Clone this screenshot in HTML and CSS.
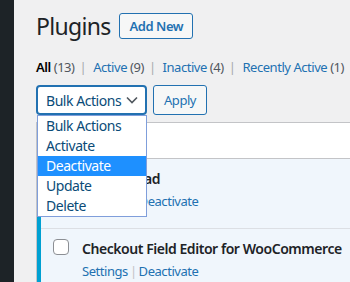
FILE: index.html
```html
<!DOCTYPE html>
<html lang="en">
<head>
    <meta charset="UTF-8">
    <meta name="viewport" content="width=device-width, initial-scale=1.0">
    <title>Plugins</title>
    <link rel="stylesheet" href="styles.css">
</head>
<body>
    <div class="admin">
        <div class="sidebar"></div>

        <main class="wrap">
            <div class="title-row">
                <h1>Plugins</h1>
                <a class="page-action" href="#">Add New</a>
            </div>

            <ul class="subsubsub">
                <li><a class="current" href="#">All <span class="count">(13)</span></a><span class="sep">|</span></li>
                <li><a href="#">Active <span class="count">(9)</span></a><span class="sep">|</span></li>
                <li><a href="#">Inactive <span class="count">(4)</span></a><span class="sep">|</span></li>
                <li><a href="#">Recently Active <span class="count">(1)</span></a></li>
            </ul>

            <div class="tablenav">
                <div class="bulk">
                    <div class="select">
                        <span>Bulk Actions</span>
                        <svg class="chevron" width="12" height="8" viewBox="0 0 12 8">
                            <polyline points="1,1.5 6,6.5 11,1.5" fill="none" stroke="#50575e" stroke-width="1.6"/>
                        </svg>
                    </div>
                    <!-- open list of the select -->
                    <ul class="dropdown">
                        <li>Bulk Actions</li>
                        <li>Activate</li>
                        <li class="hover">Deactivate</li>
                        <li>Update</li>
                        <li>Delete</li>
                    </ul>
                </div>
                <button class="button">Apply</button>
            </div>

            <div class="plugins">
                <div class="plugins-head"></div>

                <div class="plugin-row active">
                    <div class="check-col"><span class="checkbox"></span></div>
                    <div class="plugin-col">
                        <strong class="plugin-name">Easy Upload</strong>
                        <div class="row-actions"><a href="#">Settings</a><span class="sep">|</span><a href="#">Deactivate</a></div>
                    </div>
                </div>

                <div class="plugin-row active">
                    <div class="check-col"><span class="checkbox"></span></div>
                    <div class="plugin-col">
                        <strong class="plugin-name">Checkout Field Editor for WooCommerce</strong>
                        <div class="row-actions"><a href="#">Settings</a><span class="sep">|</span><a href="#">Deactivate</a></div>
                    </div>
                </div>
            </div>
        </main>
    </div>
</body>
</html>
```

FILE: styles.css
```css
:root {
    --admin-dark: #1d2327;
    --bg: #f0f0f1;
    --link: #2271b1;
    --border: #c3c4c7;
    --active-bg: #f0f6fc;
    --active-bar: #00a0d2;
}

* {
    box-sizing: border-box;
}

body {
    margin: 0;
    background: var(--bg);
    font-family: "Noto Sans", "Open Sans", sans-serif;
    font-size: 13px;
    letter-spacing: -0.45px;
    color: #3c434a;
    overflow: hidden;
}

a {
    color: var(--link);
    text-decoration: none;
}

.admin {
    display: flex;
    min-height: 282px;
}

.sidebar {
    width: 14px;
    flex-shrink: 0;
    background: var(--admin-dark);
}

.wrap {
    flex: 1;
    min-width: 0;
    padding: 13px 0 0 22px;
    overflow: hidden;
}

.title-row {
    display: flex;
    align-items: center;
    gap: 9px;
    height: 26px;
}

.title-row h1 {
    margin: 0;
    font-size: 23px;
    font-weight: 400;
    letter-spacing: -0.7px;
    line-height: 26px;
    color: var(--admin-dark);
}

.page-action {
    height: 26px;
    line-height: 24px;
    padding: 0 9px;
    border: 1px solid var(--link);
    border-radius: 3px;
    background: #f6f7f7;
    font-weight: 600;
}

.subsubsub {
    list-style: none;
    margin: 18px 0 0;
    padding: 0;
    line-height: 20px;
    white-space: nowrap;
}

.subsubsub li {
    display: inline;
}

.subsubsub .sep {
    margin: 0 4px 0 5px;
    color: #a7aaad;
}

.subsubsub .count {
    color: #50575e;
}

.subsubsub .current {
    color: #000;
    font-weight: 600;
}

.subsubsub .current .count {
    font-weight: 400;
}

.tablenav {
    display: flex;
    gap: 6px;
    margin-top: 8px;
    height: 30px;
}

.bulk {
    position: relative;
}

.select {
    display: flex;
    align-items: center;
    justify-content: space-between;
    width: 111px;
    height: 30px;
    padding: 0 7px 0 8px;
    border: 2px solid var(--link);
    border-radius: 4px;
    background: #fff;
    color: #0a4b78;
    font-size: 14px;
    white-space: nowrap;
}

.dropdown {
    position: absolute;
    top: 30px;
    left: 1px;
    width: 110px;
    margin: 0;
    padding: 0;
    list-style: none;
    background: #fff;
    border: 1px solid #7f9edb;
    color: #0a4b78;
    font-size: 14px;
    z-index: 2;
}

.dropdown li {
    height: 20px;
    line-height: 20px;
    padding-left: 8px;
    white-space: nowrap;
}

.dropdown li.hover {
    background: #1e90ff;
    color: #fff;
}

.button {
    height: 30px;
    padding: 0 10px;
    border: 1px solid var(--link);
    border-radius: 3px;
    background: #f6f7f7;
    color: var(--link);
    font-family: inherit;
    font-size: 13px;
    letter-spacing: inherit;
}

.plugins {
    width: 420px;
    margin-top: 7px;
    border: 1px solid var(--border);
    background: #fff;
}

.plugins-head {
    height: 36px;
    border-bottom: 1px solid var(--border);
}

.plugin-row {
    display: flex;
    height: 70px;
    box-shadow: inset 0 -1px 0 #dcdfe4;
}

.plugin-row.active {
    background: var(--active-bg);
}

.check-col {
    width: 35px;
    flex-shrink: 0;
    padding: 10px 0 0 12px;
    border-left: 4px solid var(--active-bar);
}

.checkbox {
    display: block;
    width: 16px;
    height: 16px;
    border: 1px solid #8c8f94;
    border-radius: 4px;
    background: #fff;
}

.plugin-col {
    padding: 10px 10px 0;
    white-space: nowrap;
}

.plugin-name {
    display: block;
    font-size: 14px;
    font-weight: 600;
    line-height: 20px;
    color: var(--admin-dark);
}

.row-actions {
    margin-top: 2px;
    line-height: 20px;
}

.row-actions .sep {
    margin: 0 2px;
    color: #c3c4c7;
}
```
